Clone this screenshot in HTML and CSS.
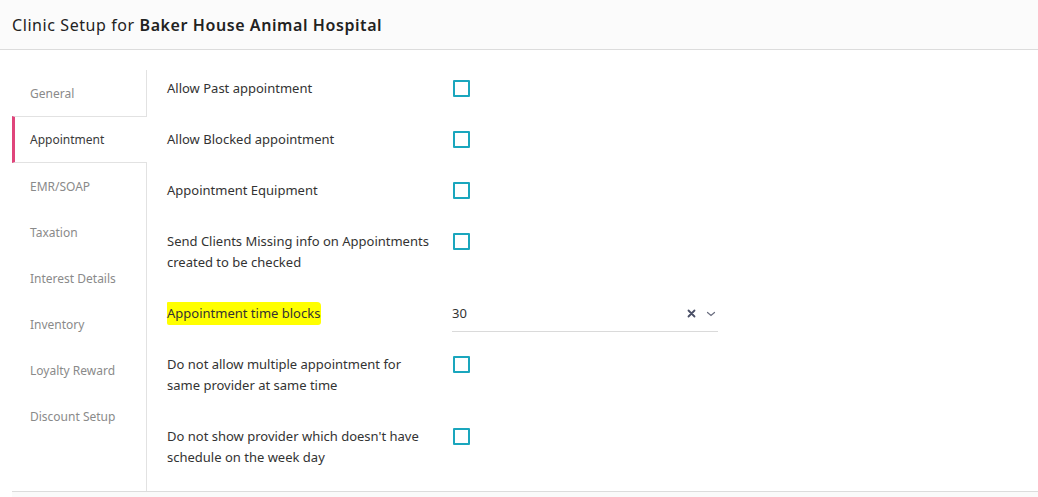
FILE: index.html
```html
<!DOCTYPE html>
<html>
<head>
<meta charset="utf-8">
<link rel="stylesheet" href="styles.css">
</head>
<body>
<header class="topbar">
  <h1 class="title">Clinic Setup for <strong>Baker House Animal Hospital</strong></h1>
</header>
<main class="setup">
  <nav class="tabs">
    <a class="tab">General</a>
    <a class="tab active">Appointment</a>
    <a class="tab">EMR/SOAP</a>
    <a class="tab">Taxation</a>
    <a class="tab">Interest Details</a>
    <a class="tab">Inventory</a>
    <a class="tab">Loyalty Reward</a>
    <a class="tab">Discount Setup</a>
  </nav>
  <section class="panel">
    <div class="row">
      <div class="label">Allow Past appointment</div>
      <span class="check"></span>
    </div>
    <div class="row">
      <div class="label">Allow Blocked appointment</div>
      <span class="check"></span>
    </div>
    <div class="row">
      <div class="label">Appointment Equipment</div>
      <span class="check"></span>
    </div>
    <div class="row">
      <div class="label">Send Clients Missing info on Appointments created to be checked</div>
      <span class="check"></span>
    </div>
    <div class="row">
      <div class="label"><span class="mark">Appointment time blocks</span></div>
      <div class="select">
        <span class="value">30</span>
        <span class="controls">
          <svg class="clear" width="9" height="9" viewBox="0 0 9 9"><path d="M1.5 1.5L7.5 7.5M7.5 1.5L1.5 7.5" stroke="#4a4f66" stroke-width="1.8" stroke-linecap="round"/></svg>
          <svg class="caret" width="10" height="6" viewBox="0 0 10 6"><path d="M1.5 1.5L5 4.5L8.5 1.5" stroke="#6b6f80" stroke-width="1.2" fill="none" stroke-linecap="round"/></svg>
        </span>
      </div>
    </div>
    <div class="row">
      <div class="label">Do not allow multiple appointment for same provider at same time</div>
      <span class="check"></span>
    </div>
    <div class="row">
      <div class="label">Do not show provider which doesn't have schedule on the week day</div>
      <span class="check"></span>
    </div>
  </section>
</main>
<div class="footer"></div>
</body>
</html>
```
FILE: styles.css
```css
* { box-sizing: border-box; }
html, body {
  margin: 0;
  padding: 0;
  background: #fff;
  font-family: "Noto Sans", "Open Sans", sans-serif;
  color: #333;
}
.topbar {
  height: 50px;
  background: #fbfbfb;
  border-bottom: 1px solid #dcdcdc;
  display: flex;
  align-items: center;
  padding-left: 12px;
}
.title {
  margin: 0;
  font-size: 16px;
  font-weight: 400;
  color: #222;
  letter-spacing: 0.58px;
}
.title strong { font-weight: 600; }
.setup {
  display: flex;
  margin-left: 12px;
  padding-top: 12px;
  border-bottom: 1px solid #dcdcdc;
}
.tabs {
  width: 135px;
  flex: none;
  display: flex;
  flex-direction: column;
  margin-top: 8px;
  border-right: 1px solid #e2e2e2;
}
.tab {
  display: flex;
  align-items: center;
  height: 46px;
  padding-left: 18px;
  padding-top: 1px;
  font-size: 12px;
  color: #8a8a8a;
  margin-right: -1px;
}
.tab:first-child { padding-top: 0; }
.tab.active {
  height: 47px;
  padding-top: 0;
  color: #3a3a3a;
  background: #fff;
  border-top: 1px solid #e2e2e2;
  border-bottom: 1px solid #e2e2e2;
  border-left: 3px solid #e0457b;
  padding-left: 15px;
  position: relative;
  z-index: 1;
}
.panel {
  flex: 1;
  padding: 0 0 8px 20px;
  margin-top: 1px;
}
.row {
  display: flex;
  align-items: flex-start;
  padding: 15px 0;
  font-size: 13px;
  line-height: 21px;
}
.label {
  width: 286px;
  flex: none;
  padding-right: 20px;
  color: #333;
}
.mark {
  background: #ffff00;
  padding: 2px 1px 3px 0;
  border-radius: 1px 4px 3px 2px;
}
.check {
  width: 17px;
  height: 17px;
  border: 2px solid #1aa6bd;
  border-radius: 1px;
  margin-top: 2px;
}
.select {
  width: 266px;
  display: flex;
  align-items: center;
  justify-content: space-between;
  border-bottom: 1px solid #dadada;
  padding-bottom: 7px;
  margin-bottom: -8px;
  margin-left: -1px;
}
.value { color: #333; }
.controls {
  display: flex;
  align-items: center;
  gap: 10px;
  padding-right: 2px;
}
.footer {
  margin-left: 12px;
  height: 10px;
  background: #fafafa;
}
```
